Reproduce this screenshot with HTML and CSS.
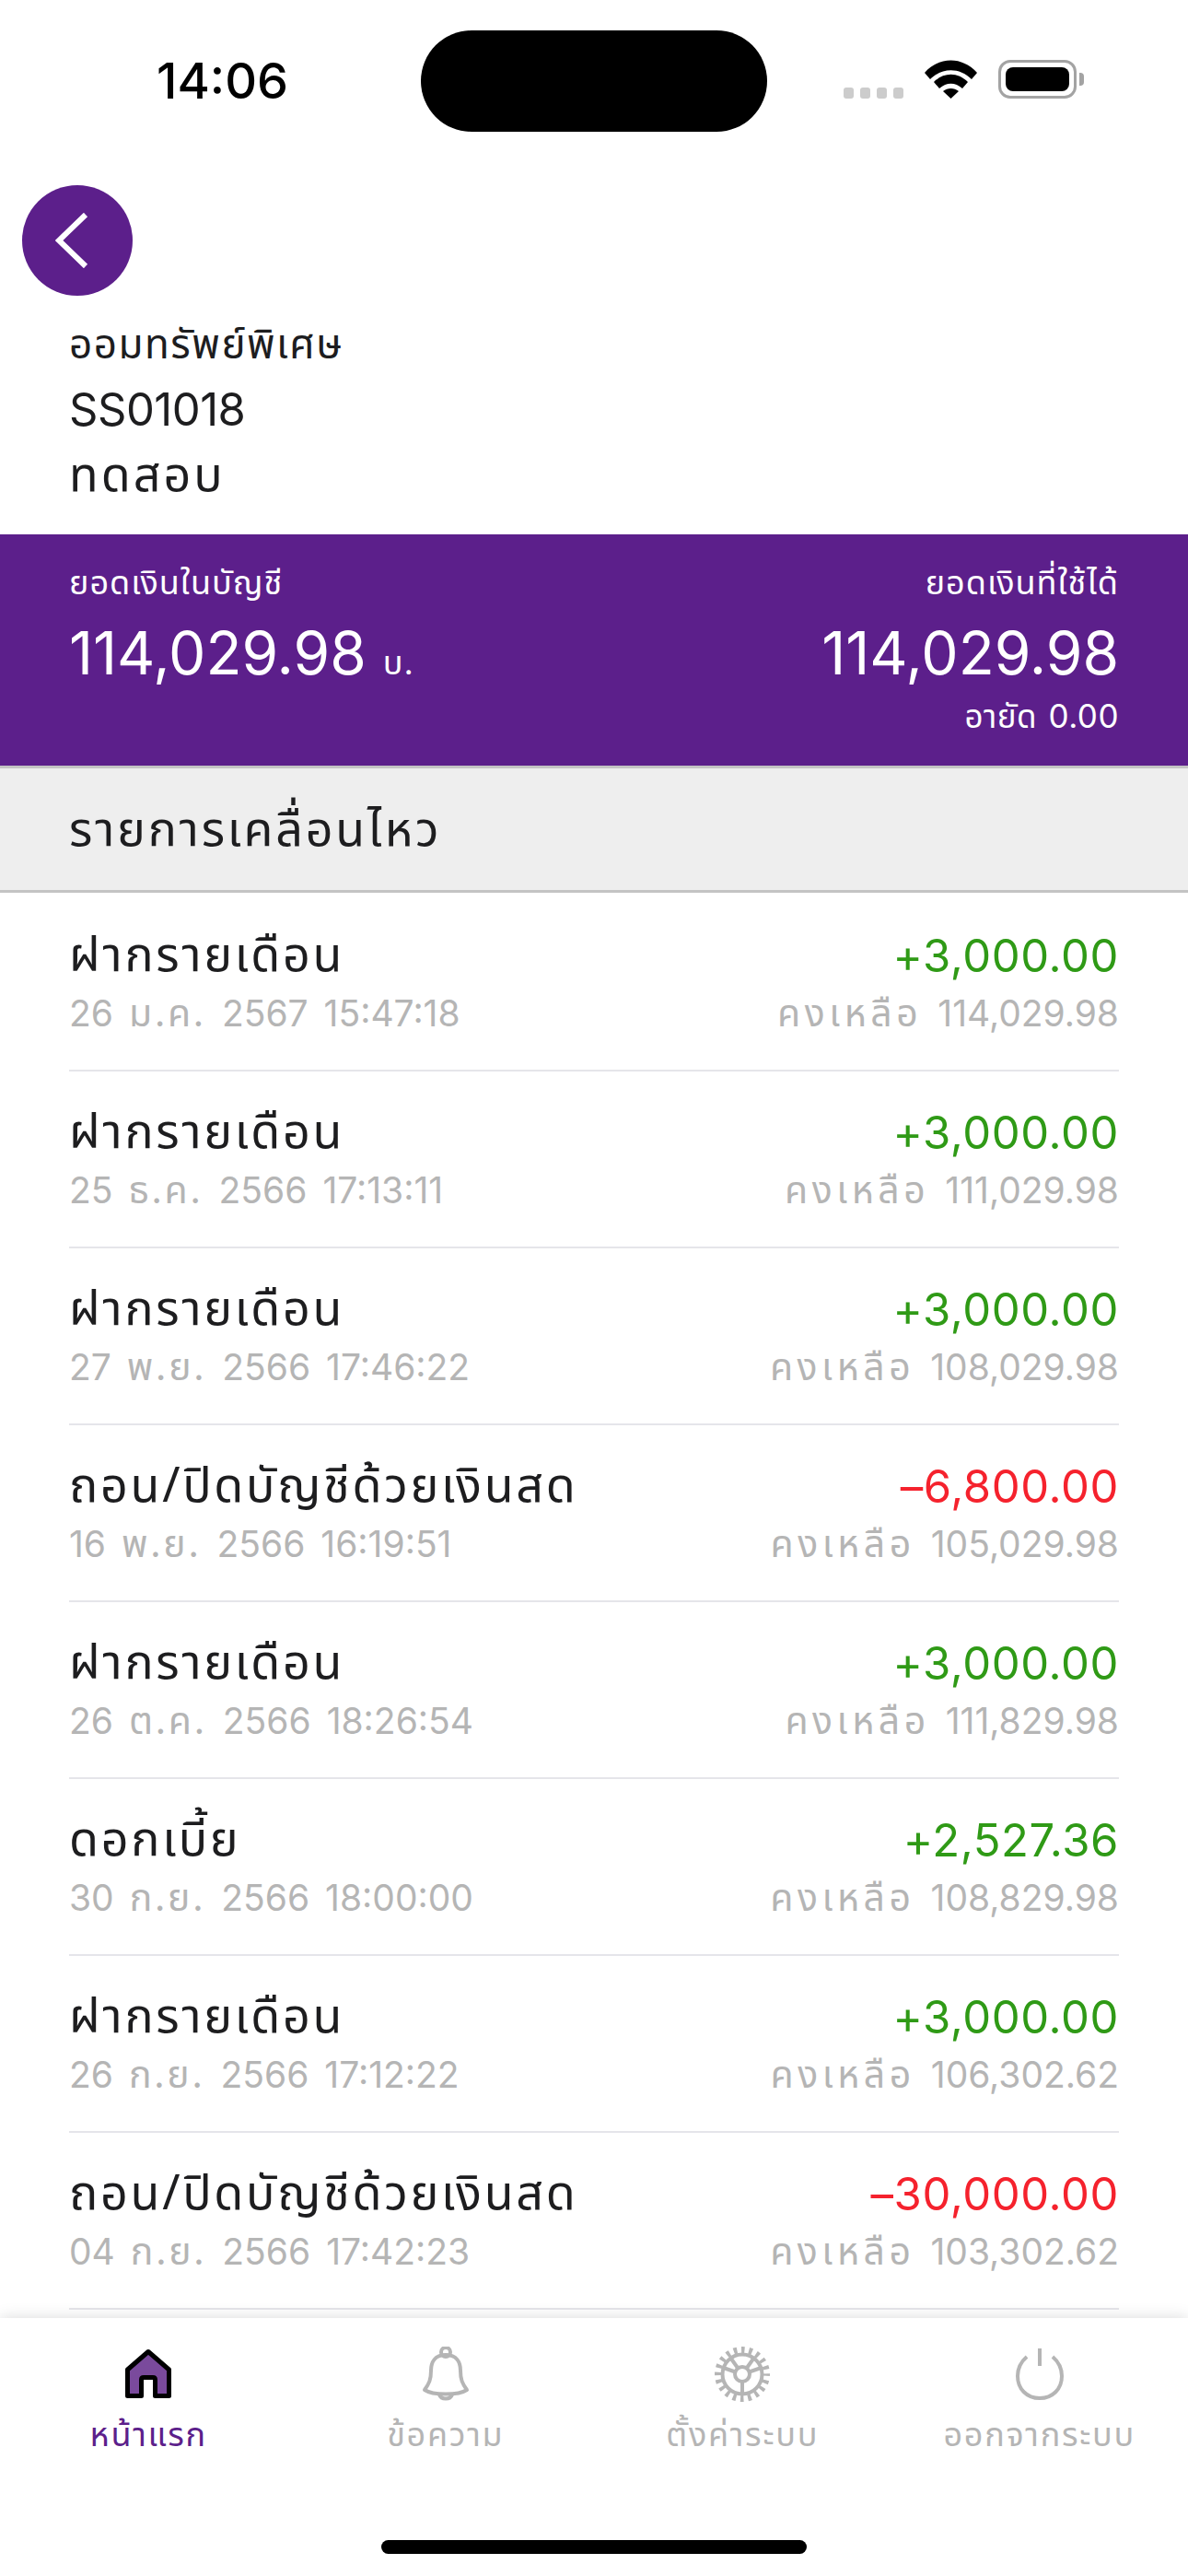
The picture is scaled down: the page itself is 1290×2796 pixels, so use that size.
FILE: index.html
```html
<!DOCTYPE html>
<html lang="th">
<head>
    <meta charset="UTF-8" />
    <title>รายการเคลื่อนไหว</title>
    <link rel="stylesheet" href="styles.css">
</head>
<body>
    <div class="screen">
        <div class="status-bar">
            <span class="clock">14:06</span>
            <div class="island"></div>
            <div class="status-icons">
                <div class="signal"><i></i><i></i><i></i><i></i></div>
                <svg class="wifi" width="57" height="42" viewBox="0 0 57 42">
                    <path d="M0 14 C16 -4 41 -4 57 14 L51 21 C38 8 19 8 6 21 Z" />
                    <path d="M10 24 C21 13 36 13 47 24 L41 31 C33 24 24 24 16 31 Z" />
                    <path d="M20 34 C25 30 32 30 37 34 L28.5 42 Z" />
                </svg>
                <div class="battery"><div class="battery-fill"></div></div>
                <div class="battery-nub"></div>
            </div>
        </div>

        <div class="back-row">
            <a class="back-btn" href="#">
                <svg width="36" height="60" viewBox="0 0 36 60">
                    <path d="M33 2 L4 30 L33 58" fill="none" stroke="#fff" stroke-width="6" />
                </svg>
            </a>
        </div>

        <div class="account-info">
            <p class="account-type">ออมทรัพย์พิเศษ</p>
            <p class="account-code">SS01018</p>
            <p class="account-name">ทดสอบ</p>
        </div>

        <div class="balance-band">
            <div class="balance-col">
                <p class="balance-label">ยอดเงินในบัญชี</p>
                <p class="balance-value">114,029.98 <small>บ.</small></p>
            </div>
            <div class="balance-col right">
                <p class="balance-label">ยอดเงินที่ใช้ได้</p>
                <p class="balance-value">114,029.98</p>
                <p class="balance-hold"><span class="th">อายัด</span> 0.00</p>
            </div>
        </div>

        <div class="section-title">รายการเคลื่อนไหว</div>

        <div class="tx-list">
            <div class="tx-row">
                <div><p class="tx-name">ฝากรายเดือน</p><p class="tx-sub">26 <span class="th">ม.ค.</span> 2567 15:47:18</p></div>
                <div class="right"><p class="tx-amount plus">+3,000.00</p><p class="tx-sub"><span class="th">คงเหลือ</span> 114,029.98</p></div>
            </div>
            <div class="tx-row">
                <div><p class="tx-name">ฝากรายเดือน</p><p class="tx-sub">25 <span class="th">ธ.ค.</span> 2566 17:13:11</p></div>
                <div class="right"><p class="tx-amount plus">+3,000.00</p><p class="tx-sub"><span class="th">คงเหลือ</span> 111,029.98</p></div>
            </div>
            <div class="tx-row">
                <div><p class="tx-name">ฝากรายเดือน</p><p class="tx-sub">27 <span class="th">พ.ย.</span> 2566 17:46:22</p></div>
                <div class="right"><p class="tx-amount plus">+3,000.00</p><p class="tx-sub"><span class="th">คงเหลือ</span> 108,029.98</p></div>
            </div>
            <div class="tx-row">
                <div><p class="tx-name">ถอน/ปิดบัญชีด้วยเงินสด</p><p class="tx-sub">16 <span class="th">พ.ย.</span> 2566 16:19:51</p></div>
                <div class="right"><p class="tx-amount minus">–6,800.00</p><p class="tx-sub"><span class="th">คงเหลือ</span> 105,029.98</p></div>
            </div>
            <div class="tx-row">
                <div><p class="tx-name">ฝากรายเดือน</p><p class="tx-sub">26 <span class="th">ต.ค.</span> 2566 18:26:54</p></div>
                <div class="right"><p class="tx-amount plus">+3,000.00</p><p class="tx-sub"><span class="th">คงเหลือ</span> 111,829.98</p></div>
            </div>
            <div class="tx-row">
                <div><p class="tx-name">ดอกเบี้ย</p><p class="tx-sub">30 <span class="th">ก.ย.</span> 2566 18:00:00</p></div>
                <div class="right"><p class="tx-amount plus">+2,527.36</p><p class="tx-sub"><span class="th">คงเหลือ</span> 108,829.98</p></div>
            </div>
            <div class="tx-row">
                <div><p class="tx-name">ฝากรายเดือน</p><p class="tx-sub">26 <span class="th">ก.ย.</span> 2566 17:12:22</p></div>
                <div class="right"><p class="tx-amount plus">+3,000.00</p><p class="tx-sub"><span class="th">คงเหลือ</span> 106,302.62</p></div>
            </div>
            <div class="tx-row">
                <div><p class="tx-name">ถอน/ปิดบัญชีด้วยเงินสด</p><p class="tx-sub">04 <span class="th">ก.ย.</span> 2566 17:42:23</p></div>
                <div class="right"><p class="tx-amount minus">–30,000.00</p><p class="tx-sub"><span class="th">คงเหลือ</span> 103,302.62</p></div>
            </div>
        </div>

        <div class="tab-bar">
            <div class="tab active">
                <svg width="60" height="60" viewBox="0 0 60 60">
                    <path d="M30 5.5 L52.5 25 V53.5 H37.5 V36 Q37.5 33.5 35 33.5 H25 Q22.5 33.5 22.5 36 V53.5 H7.5 V25 Z" fill="#7a4a9c" stroke="#000" stroke-width="5" stroke-linejoin="round" />
                </svg>
                <span>หน้าแรก</span>
            </div>
            <div class="tab">
                <svg width="60" height="60" viewBox="0 0 60 60" fill="none" stroke="#b5b5b5" stroke-width="4">
                    <circle cx="30" cy="6" r="5" />
                    <path d="M30 9 C18 9 14 17 14 26 C14 36 12 40 7 47 C16 53 44 53 53 47 C48 40 46 36 46 26 C46 17 42 9 30 9 Z" stroke-linejoin="round" />
                    <path d="M23 52 C25 58 35 58 37 52" />
                </svg>
                <span>ข้อความ</span>
            </div>
            <div class="tab">
                <svg width="60" height="60" viewBox="0 0 60 60" fill="none" stroke="#b5b5b5" stroke-width="4">
                    <circle cx="30" cy="30" r="21.5" />
                    <circle cx="30" cy="30" r="26.5" stroke-width="7" stroke-dasharray="3.6 4.725" stroke-dashoffset="1.8" />
                    <circle cx="30" cy="30" r="8" />
                    <path d="M30 38 V52 M22.4 27.5 L9.5 23 M37.6 27.5 L50.5 23 M25.3 23.5 L17.5 12.5 M34.7 23.5 L42.5 12.5" />
                </svg>
                <span>ตั้งค่าระบบ</span>
            </div>
            <div class="tab">
                <svg width="60" height="60" viewBox="0 0 60 60" fill="none" stroke="#b5b5b5" stroke-width="4">
                    <path d="M30 2 V21" />
                    <path d="M16 11 C9 17 6 24 6 32 C6 46 16 56 30 56 C44 56 54 46 54 32 C54 24 51 17 44 11" />
                </svg>
                <span>ออกจากระบบ</span>
            </div>
            <div class="home-indicator"></div>
        </div>
    </div>
</body>
</html>
```
FILE: styles.css
```css
* {
    box-sizing: border-box;
}
body {
    margin: 0;
    padding: 0;
    background-color: #fff;
    color: #1d1d1f;
    font-family: "Noto Sans Thai", "Noto Sans", "Lato", "DejaVu Sans", sans-serif;
}
p {
    margin: 0;
}
.screen {
    width: 1290px;
    height: 2796px;
    overflow: hidden;
    position: relative;
}
.right {
    text-align: right;
}
/* lines with numbers: Inter has the narrow 1 */
.account-code, .balance-value, .balance-hold, .tx-amount, .tx-sub {
    font-family: "Inter", "Noto Sans Thai", "Noto Sans", sans-serif;
}

/* status bar */
.status-bar {
    height: 201px;
    padding: 33px 112px 0 170px;
    display: flex;
    align-items: flex-start;
}
.clock {
    width: 287px;
    margin-top: 25px;
    font-family: "Inter", sans-serif;
    font-size: 54px;
    line-height: 60px;
    font-weight: 500;
    color: #000;
}
.island {
    width: 376px;
    height: 110px;
    border-radius: 55px;
    background: #000;
}
.status-icons {
    margin: 32px 0 0 83px;
    height: 42px;
    display: flex;
    align-items: flex-end;
}
.signal {
    display: flex;
    gap: 7px;
    margin-right: 23px;
}
.signal i {
    width: 11px;
    height: 12px;
    border-radius: 3px;
    background: #ccc;
}
.wifi {
    fill: #000;
    margin-right: 23px;
}
.battery {
    width: 85px;
    height: 42px;
    padding: 5px;
    border: 3px solid #a3a3a3;
    border-radius: 13px;
}
.battery-fill {
    height: 100%;
    background: #000;
    border-radius: 8px;
}
.battery-nub {
    width: 5px;
    height: 14px;
    margin: 0 0 14px 3px;
    background: #a3a3a3;
    border-radius: 0 4px 4px 0;
}

/* account header */
.back-row {
    padding-left: 24px;
}
.back-btn {
    width: 120px;
    height: 120px;
    border-radius: 50%;
    background: #5c1f8b;
    display: flex;
    align-items: center;
    justify-content: center;
}
.back-btn svg {
    margin-right: 12px;
}
.account-info {
    padding: 21px 75px 0;
    height: 259px;
}
.account-type {
    font-size: 44px;
    line-height: 67px;
    letter-spacing: 1.5px;
}
.account-code {
    font-size: 49px;
    line-height: 72px;
    letter-spacing: -0.5px;
}
.account-name {
    font-size: 52px;
    line-height: 72px;
    letter-spacing: 3px;
}

/* balance */
.balance-band {
    height: 251px;
    padding: 29px 75px 0;
    background: #5c1f8b;
    color: #fff;
    display: flex;
    justify-content: space-between;
}
.balance-label {
    font-size: 36px;
    line-height: 50px;
    letter-spacing: 1px;
}
.balance-hold {
    margin-top: 3px;
    font-size: 35px;
    line-height: 50px;
    letter-spacing: 0.5px;
    word-spacing: 2px;
}
.balance-value {
    margin-top: 10px;
    font-size: 64px;
    line-height: 80px;
}
.balance-value small {
    font-size: 36px;
    letter-spacing: 1px;
}

.section-title {
    height: 138px;
    padding: 0 75px;
    background: #eee;
    border-top: 3px solid #c4c4c4;
    border-bottom: 3px solid #c4c4c4;
    font-size: 52px;
    line-height: 136px;
    letter-spacing: 2.8px;
}

/* transactions */
.tx-list {
    padding: 2px 75px 0;
}
.tx-row {
    height: 192px;
    padding-top: 32px;
    border-bottom: 2px solid #e5e5ea;
    display: flex;
    justify-content: space-between;
}
.tx-name {
    font-size: 52px;
    line-height: 70px;
    letter-spacing: 2.7px;
}
.tx-amount {
    font-size: 49px;
    line-height: 70px;
    letter-spacing: 0.6px;
}
.tx-sub {
    margin-top: -3px;
    font-size: 39px;
    line-height: 58px;
    word-spacing: 6px;
    color: #b5b5b5;
}
.tx-sub .th {
    font-size: 41px;
    letter-spacing: 2.5px;
}
.right .tx-sub .th {
    letter-spacing: 4.5px;
}
.plus {
    color: #2f9a16;
}
.minus {
    color: #f5222d;
}

/* bottom tabs */
.tab-bar {
    position: absolute;
    left: 0;
    right: 0;
    top: 2516px;
    bottom: 0;
    background: #fff;
    box-shadow: 0 0 16px rgba(0, 0, 0, 0.15);
    display: grid;
    grid-template-columns: repeat(4, 1fr);
    align-items: start;
    padding-top: 31px;
}
.tab {
    display: flex;
    flex-direction: column;
    align-items: center;
    color: #b5b5b5;
    font-size: 36px;
    line-height: 50px;
    letter-spacing: 1.7px;
}
.tab svg {
    display: block;
    margin-bottom: 12px;
}
.tab.active {
    color: #5c1f8b;
}
.home-indicator {
    position: absolute;
    left: 414px;
    top: 241px;
    width: 462px;
    height: 15px;
    border-radius: 8px;
    background: #000;
}
```
